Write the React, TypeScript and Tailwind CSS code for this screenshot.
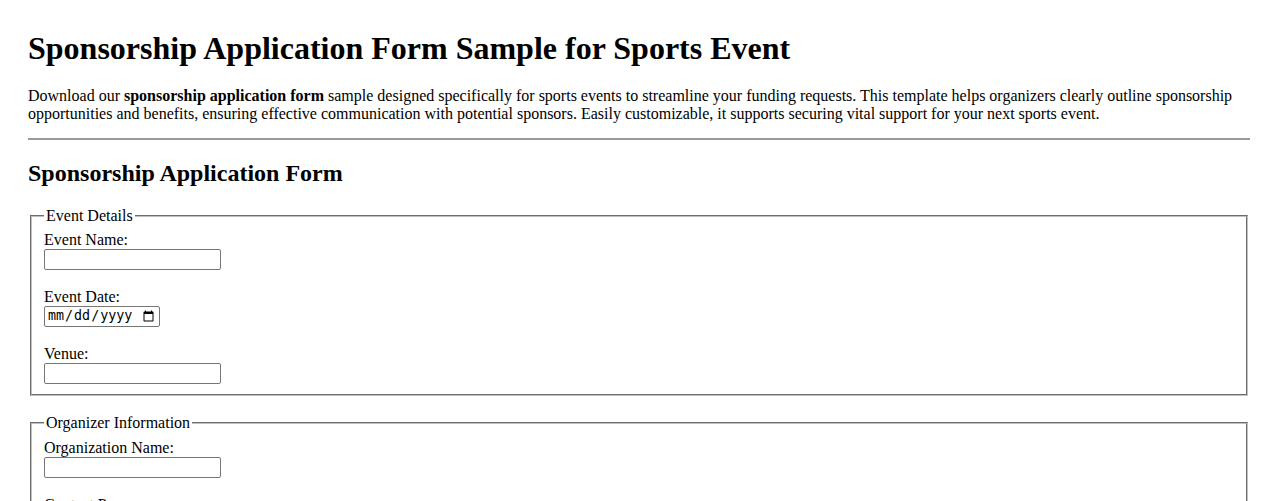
const inputCls =
  "block w-[177px] h-[21px] border border-[#767676] rounded-[2px] bg-white px-[2px] py-[1px] text-[13.333px] font-['Liberation_Sans',Arial,sans-serif]"

const fieldsetCls =
  "mx-[2px] mb-[18px] border-2 [border-style:groove] border-[#c0c0c0] px-3 pt-[6px] pb-[10px]"

const Field = ({ label, type = "text", last = false }: { label: string; type?: string; last?: boolean }) => (
  <div className={last ? "" : "mb-[18px]"}>
    <label className="block h-[18px] leading-[18px]">{label}</label>
    {type === "date" ? (
      <input
        type="date"
        className="block w-[116px] h-[21px] border border-[#767676] rounded-[2px] bg-white px-[2px] py-[1px] text-[13.333px] font-['DejaVu_Sans_Mono',monospace]"
      />
    ) : (
      <input type={type} className={inputCls} />
    )}
  </div>
)

export default function App() {
  return (
    <main className="bg-white text-black px-[28px] pt-[30px] font-['Liberation_Serif','Times_New_Roman',serif] text-base leading-[17.7px]">
      <h1 className="text-[32px] font-bold leading-[36px]">Sponsorship Application Form Sample for Sports Event</h1>

      <p className="mt-[21px]">
        Download our <strong className="font-bold">sponsorship application form</strong> sample designed specifically
        for sports events to streamline your funding requests. This template helps organizers clearly outline
        sponsorship opportunities and benefits, ensuring effective communication with potential sponsors. Easily
        customizable, it supports securing vital support for your next sports event.
      </p>

      <hr className="mt-4 border-t-2 [border-style:inset] border-[#eee] h-0" />

      <h2 className="mt-[20px] text-2xl font-bold leading-[26.6px]">Sponsorship Application Form</h2>

      <form className="mt-[20px]">
        <fieldset className={fieldsetCls}>
          <legend className="px-[2px]">Event Details</legend>
          <Field label="Event Name:" />
          <Field label="Event Date:" type="date" />
          <Field label="Venue:" last />
        </fieldset>

        <fieldset className={fieldsetCls}>
          <legend className="px-[2px]">Organizer Information</legend>
          <div className="pt-[2px]">
            <Field label="Organization Name:" />
            <Field label="Contact Person:" />
            <Field label="Email:" type="email" />
            <Field label="Phone:" type="tel" last />
          </div>
        </fieldset>
      </form>
    </main>
  )
}
